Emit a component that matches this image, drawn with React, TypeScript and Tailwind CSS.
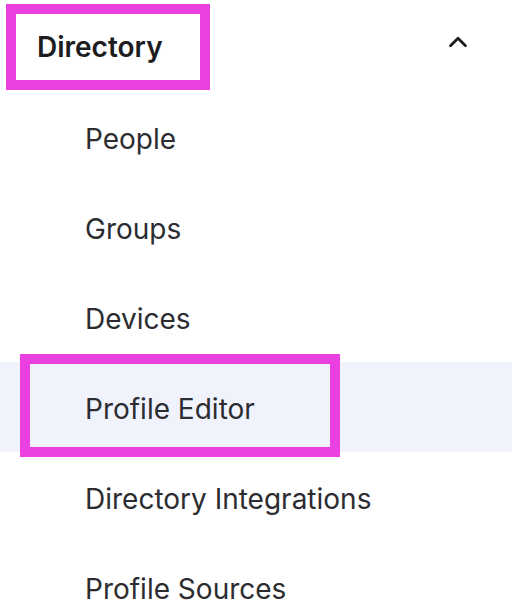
import { ChevronUp } from "lucide-react"

const items = ["People", "Groups", "Devices", "Profile Editor", "Directory Integrations", "Profile Sources"]

function App() {
  return (
    <div className="w-[512px] h-[608px] bg-white overflow-hidden" style={{ fontFamily: "Inter, 'Noto Sans', sans-serif" }}>
      <div className="relative flex items-center justify-between h-[92px] pt-[1px]">
        <span className="pl-[37px] text-[28px] font-semibold text-[#1d1d21]">Directory</span>
        <ChevronUp className="mr-[39px] mb-[9px] w-[30px] h-[30px] text-[#1d1d21]" strokeWidth={2.2} />
        <div className="absolute left-[6px] top-[4px] w-[204px] h-[86px] border-[10px] border-[#ea40e1]" />
      </div>
      <div className="flex flex-col">
        {items.map((item) => {
          const active = item === "Profile Editor"
          return (
            <div
              key={item}
              className={`relative flex items-center h-[90px] pt-[3px] pl-[85px] text-[28px] text-[#2c2c31] ${active ? "bg-[#f0f3fc]" : ""}`}
            >
              {item}
              {active && (
                <div className="absolute left-[20px] top-[-8px] w-[320px] h-[103px] border-[10px] border-[#ea40e1]" />
              )}
            </div>
          )
        })}
      </div>
    </div>
  )
}

export default App
